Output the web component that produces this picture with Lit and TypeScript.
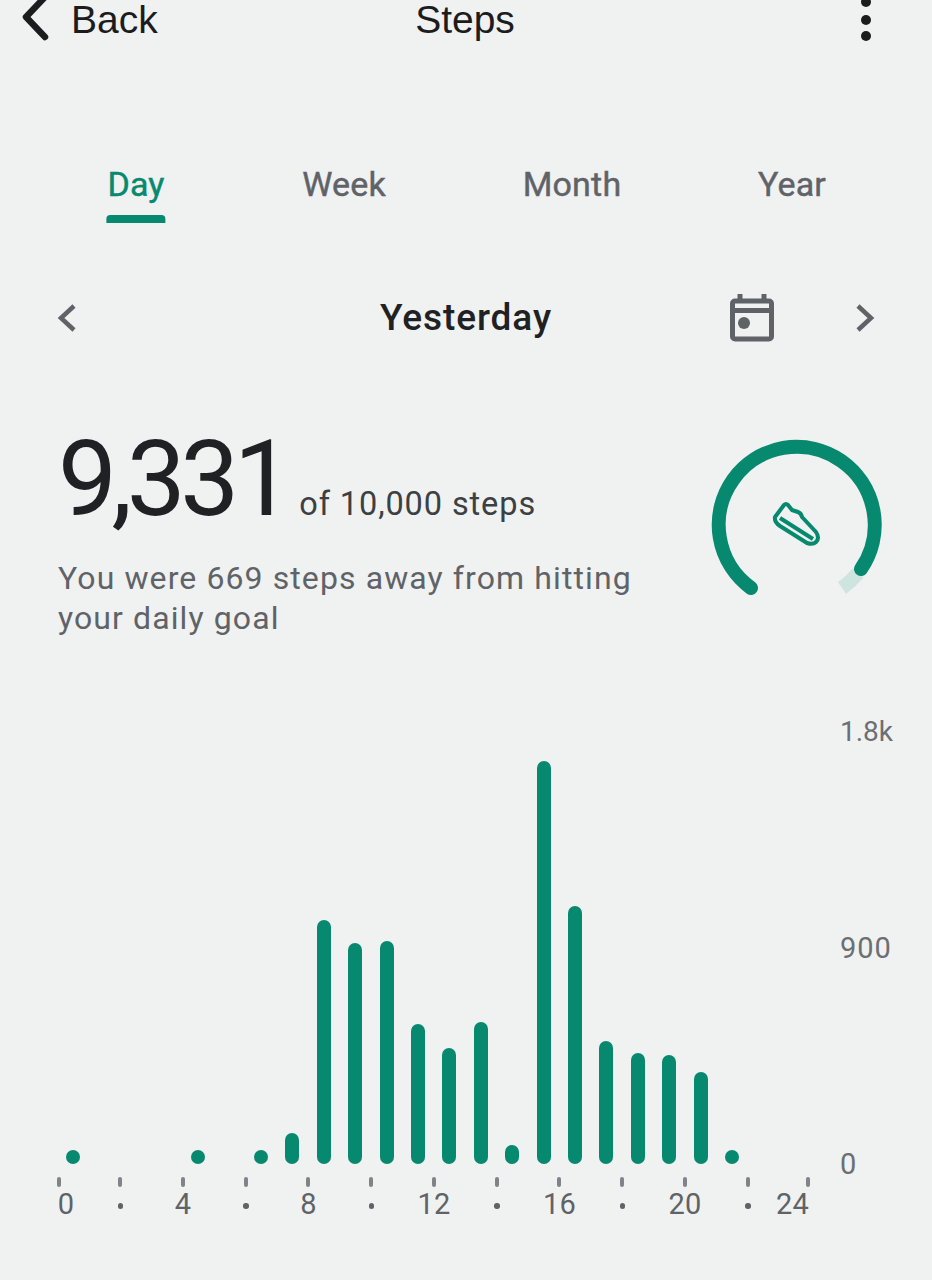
import { LitElement, html, css } from "lit";
import { customElement } from "lit/decorators.js";

const bars: (number | null)[] = [7, null, null, null, 7, null, 7, 31, 244, 221, 223, 140, 116, 142, 19, 403, 258, 123, 111, 109, 92, 7, null, null];
const ticks = ["0", "", "4", "", "8", "", "12", "", "16", "", "20", "", "24"];

@customElement("app-root")
export class AppRoot extends LitElement {
  static styles = css`
    :host { display: block; width: 932px; height: 1280px; background: #f0f1f1; color: #202124; font-family: "Roboto", "Liberation Sans", sans-serif; overflow: hidden; }
    .top { height: 40px; display: flex; align-items: center; }
    .back { display: flex; align-items: center; gap: 21px; margin-left: 20px; font-family: "Liberation Sans", sans-serif; font-size: 39px; line-height: 40px; width: 330px; color: #1c1c1e; }
    .title { width: 200px; text-align: center; margin-left: 15px; font-family: "Liberation Sans", sans-serif; font-size: 39px; line-height: 40px; color: #1c1c1e; }
    .more { margin-left: 294px; display: flex; }
    .tabs { display: flex; margin-top: 125px; height: 58px; position: relative; }
    .tab { font-weight: 400; -webkit-text-stroke: .45px currentColor; font-size: 34px; line-height: 40px; letter-spacing: .2px; color: #5f6368; text-align: center; position: absolute; top: -1px; transform: translateX(-50%); }
    .tab.on { color: #07896f; }
    .tab.on::after { content: ""; position: absolute; left: -1px; right: -1px; top: 51px; height: 8px; background: #07896f; border-radius: 4px 4px 0 0; }
    .date { display: flex; align-items: center; margin-top: 71px; height: 48px; }
    .date .lbl { font-weight: 500; font-size: 37px; letter-spacing: .9px; color: #202124; width: 300px; text-align: center; margin-left: 237px; margin-top: -2px; }
    .summary { display: flex; margin-top: 74px; height: 228px; }
    .left { margin-left: 58px; width: 640px; }
    .big { display: flex; align-items: baseline; gap: 12px; height: 124px; padding-top: 2px; }
    .num { font-size: 105px; letter-spacing: -5.500px; line-height: 124px; color: #202124; }
    .of { font-size: 32.500px; color: #3c4043; letter-spacing: .9px; }
    .msg { font-size: 32px; line-height: 40px; color: #5f6368; letter-spacing: 1.1px; margin-top: 16px; }
    .chart { margin-top: 74px; position: relative; }
    .plot { display: flex; align-items: flex-end; height: 446px; padding-left: 57px; }
    .col { width: 31.4px; display: flex; justify-content: center; align-items: flex-end; }
    .bar { width: 14px; background: #07896f; border-radius: 7px; }
    .dot { width: 14px; height: 14px; background: #07896f; border-radius: 50%; }
    .y { position: absolute; left: 840px; font-size: 29px; letter-spacing: 1px; line-height: 34px; color: #6b6f73; }
    .y.k { letter-spacing: 0; font-size: 28px; }
    .axis { display: flex; margin-top: 13px; padding-left: 57.4px; }
    .t { width: 62.75px; position: relative; height: 50px; flex: none; }
    .t i { position: absolute; left: -2px; top: 0; width: 4px; height: 10px; border-radius: 2px; background: #808488; }
    .t b { position: absolute; left: -2.5px; top: 26px; width: 5.5px; height: 5.5px; border-radius: 50%; background: #5f6368; }
    .t span { position: absolute; top: 10px; left: -30px; width: 60px; text-align: center; font-size: 29px; line-height: 34px; color: #5f6368; }
    .t.z span { left: -21.4px; }
    .t.z i { left: 0; }
    .t.last span { left: -48px; }
    .t.last i { left: -4px; }
    svg { display: block; flex: none; }
  `;

  render() {
    return html`
      <div class="top">
        <div class="back">
          <svg width="30" height="48" viewBox="0 0 30 48" style="margin-top:-2px"><path d="M25 2 L6 22 L25 42" fill="none" stroke="#1c1c1e" stroke-width="6.500" stroke-linecap="round" stroke-linejoin="round"/></svg>
          <span>Back</span>
        </div>
        <div class="title">Steps</div>
        <div class="more"><svg width="14" height="46" viewBox="0 0 14 46"><circle cx="7" cy="5" r="5" fill="#1c1c1e"/><circle cx="7" cy="23" r="5" fill="#1c1c1e"/><circle cx="7" cy="39" r="5" fill="#1c1c1e"/></svg></div>
      </div>
      <div class="tabs">
        <div class="tab on" style="left:136px">Day</div>
        <div class="tab" style="left:344px">Week</div>
        <div class="tab" style="left:572px">Month</div>
        <div class="tab" style="left:792px">Year</div>
      </div>
      <div class="date">
        <svg width="24" height="36" viewBox="0 0 24 36" style="margin-left:55px"><path d="M19 6 L6 18 L19 30" fill="none" stroke="#5f6368" stroke-width="4.500"/></svg>
        <div class="lbl">Yesterday</div>
        <svg width="44" height="48" viewBox="0 0 44 48" style="margin-left:114px"><path fill="none" stroke="#5f6368" stroke-width="5" d="M5 7h34a2.500 2.500 0 0 1 2.500 2.500v33a2.500 2.500 0 0 1-2.500 2.500H5a2.500 2.500 0 0 1-2.500-2.500v-33A2.500 2.500 0 0 1 5 7Z"/><path stroke="#5f6368" stroke-width="5" d="M2 16.500h40M10 0v7M34 0v7"/><circle cx="14" cy="29" r="6" fill="#5f6368"/></svg>
        <svg width="24" height="36" viewBox="0 0 24 36" style="margin-left:79px"><path d="M5 6 L18 18 L5 30" fill="none" stroke="#5f6368" stroke-width="4.500"/></svg>
      </div>
      <div class="summary">
        <div class="left">
          <div class="big"><span class="num">9,331</span><span class="of">of 10,000 steps</span></div>
          <div class="msg">You were 669 steps away from hitting<br />your daily goal</div>
        </div>
        <svg width="190" height="170" viewBox="0 0 190 170" style="margin-left:10px;margin-top:23px">
          <path d="M150 134 A78 78 0 0 1 134 149" stroke="#cde5de" stroke-width="14" fill="none"/>
          <path d="M43 149 A78 78 0 1 1 153 130" stroke="#07896f" stroke-width="14" stroke-linecap="round" fill="none"/>
          <path d="M67 78 L76 66 Q78 64 80 66 L84 71 L90 73 Q93 74 94 78 L108 93 Q112 99 108 103 Q105 106 99 104 L72 87 Q66 83 67 78 Z M72 79 L105 100" fill="none" stroke="#07896f" stroke-width="4" stroke-linejoin="round"/>
        </svg>
      </div>
      <div class="chart">
        <span class="y k" style="top:-3px">1.8k</span>
        <span class="y" style="top:213px">900</span>
        <span class="y" style="top:429px">0</span>
        <div class="plot">
          ${bars.map((b) => html`<div class="col">${b === null ? "" : b === 7 ? html`<div class="dot"></div>` : html`<div class="bar" style="height:${b}px"></div>`}</div>`)}
        </div>
        <div class="axis">
          ${ticks.map((t, i) => html`<div class="t ${i === 0 ? "z" : ""} ${i === 12 ? "last" : ""}"><i></i>${t ? html`<span>${t}</span>` : html`<b></b>`}</div>`)}
        </div>
      </div>
    `;
  }
}
